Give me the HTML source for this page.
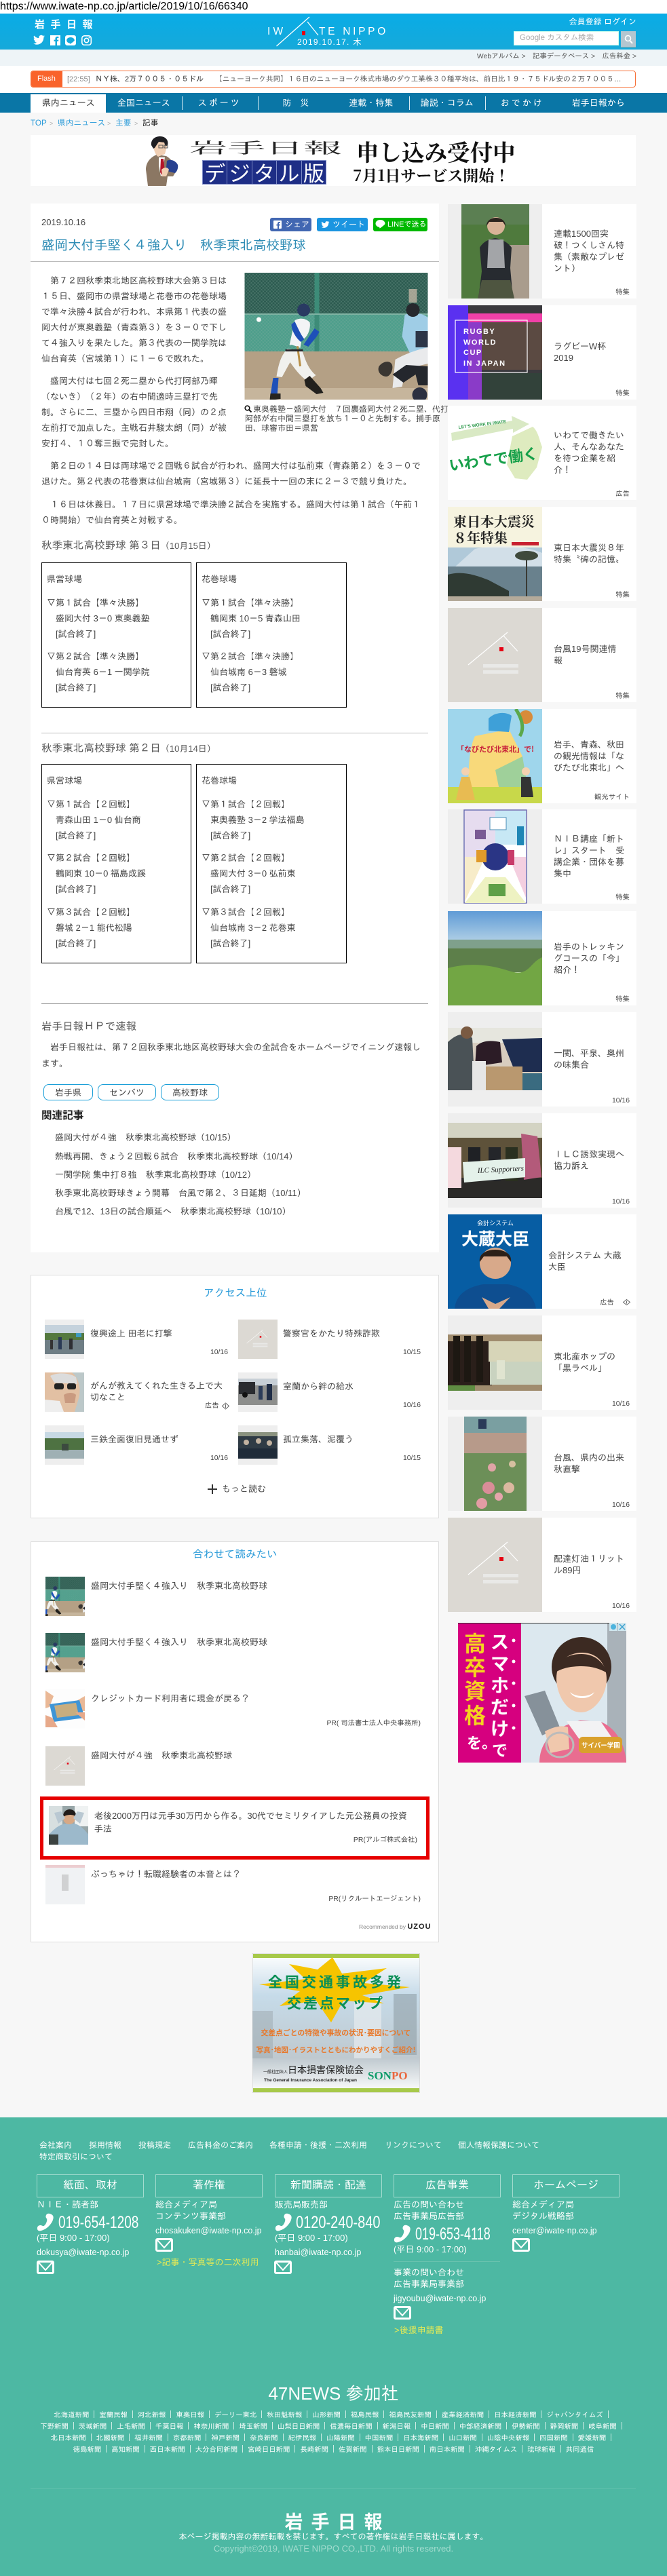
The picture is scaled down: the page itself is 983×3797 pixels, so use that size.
<!DOCTYPE html>
<html lang="ja"><head><meta charset="utf-8"><title>盛岡大付手堅く4強入り 秋季東北高校野球</title>
<style>
html,body{margin:0;padding:0}
body{width:983px;height:3797px;position:relative;overflow:hidden;background:#f7f7f7;font-family:"Liberation Sans","IPAGothic","Noto Sans CJK JP",sans-serif;font-size:13px;color:#444}
.t{position:absolute;white-space:nowrap;line-height:20px}
.b{position:absolute;white-space:nowrap}
.abs{position:absolute}
svg{display:block}
a{color:inherit;text-decoration:none}
.lk{color:#2a9bd9}
.card{position:absolute;left:660px;width:278px;height:139px;background:#fff}
.card svg{position:absolute;left:0;top:0}
.card .x{position:absolute;left:156px;top:0;height:138px;width:115px;display:flex;align-items:center;line-height:17px;white-space:nowrap}
.card .l{position:absolute;right:10px;top:124px;line-height:14px;font-size:10.4px;white-space:nowrap}
.box{position:absolute;border:1px solid #000;box-sizing:border-box;background:#fff}
.box div{position:absolute;left:7px;white-space:nowrap;line-height:23px}
.tag{position:absolute;top:1598px;height:24px;line-height:23px;box-sizing:border-box;border:1px solid #1a9fd8;border-radius:8px;text-align:center;background:#fff}
.nav{position:absolute;top:139px;height:27px;line-height:25px;width:111.5px;text-align:center;color:#fff;font-size:13px}
.sep{position:absolute;top:142px;height:20px;width:1px;background:#d7ecf4}
.fb{position:absolute;top:3205px;width:158px;height:34px;line-height:31px;box-sizing:border-box;border:1px solid #a4dccf;text-align:center;color:#fff;font-size:16px}
.f{position:absolute;color:#fff;white-space:nowrap;line-height:20px}
.nl{position:absolute;left:0;width:983px;text-align:center;color:#fff;font-size:10.4px;line-height:17px;white-space:nowrap}
.nl i{display:inline-block;width:1px;height:11px;background:#cfece4;margin:0 7px;vertical-align:-1px}
.d{position:absolute;font-size:10.4px;line-height:14px;white-space:nowrap}
</style></head><body>
<svg width="0" height="0" style="position:absolute">
<defs>
<pattern id="ch" width="5" height="5" patternUnits="userSpaceOnUse"><path d="M0 0L5 5M5 0L0 5" stroke="#8fb5a8" stroke-width=".5" opacity=".55"/></pattern>
<symbol id="bb" viewBox="0 0 270 187">
<rect width="270" height="62" fill="#2c5b50"/><rect y="62" width="270" height="54" fill="#4d9e8b"/><rect y="116" width="270" height="71" fill="#b4a085"/>
<rect width="270" height="116" fill="url(#ch)"/>
<rect x="103" y="0" width="7" height="116" fill="#3d8c78"/><rect x="0" y="60" width="270" height="2" fill="#7fb3a3"/>
<rect y="170" width="270" height="17" fill="#c6b59c"/>
<circle cx="21" cy="69" r="3.5" fill="#fff"/>
<path d="M236 62c10-4 26-3 34 4v50l-24 8-14-30z" fill="#9fcde6"/><circle cx="248" cy="55" r="10" fill="#26282d"/><rect x="242" y="24" width="12" height="20" fill="#c9b9a8" opacity=".75"/>
<path d="M252 86h18v24h-18z" fill="#2c3547"/><path d="M222 128c14-8 30-14 48-18v24l-32 8-6 26-14 2z" fill="#e9eaec"/><path d="M218 150l20-14 32 2v28h-14l-4-16-18 12z" fill="#24272d"/><path d="M198 138c6-8 16-9 19-3s-2 19-9 18c-8-1-13-8-10-15z" fill="#3a3632"/>
<circle cx="258" cy="180" r="11" fill="#2c3040"/>
<circle cx="87" cy="55" r="9.5" fill="#293a62"/>
<path d="M74 70c8-4 16-3 22 3 2 10-4 24-12 26l-2 12c-6-3-14-6-16-4z" fill="#f3f4f6"/>
<path d="M74 72c4 8 8 18 14 26l-5 4c-8-6-14-18-14-26z" fill="#1e50b8"/><path d="M103 82l-16 24 7 3c6-8 13-14 16-22z" fill="#1e50b8"/>
<path d="M63 112l22 3c4 12 8 26 20 36l-12 9c-12-8-20-20-26-28l-12 22-8-1c3-18 6-30 16-41z" fill="#f1f1ee"/>
<path d="M50 155l-8 0-4 26 10 2z" fill="#1e50b8"/><path d="M38 178h15v8l-16 2z" fill="#26241f"/>
<path d="M88 158l8-6 16 18 4 7-10 2-16-12z" fill="#22201d"/>
<rect x="78" y="108" width="3" height="30" fill="#b88f47" transform="rotate(-8 80 120)"/>
<rect x="60" y="113" width="26" height="3" fill="#27262a"/>
</symbol>
<symbol id="ph" viewBox="0 0 139 139">
<rect width="139" height="139" fill="#dcd9d3"/>
<path d="M30 84L88 36M82 41L103 64" stroke="#fff" stroke-width="1.2" fill="none"/><rect x="76" y="58" width="6" height="6" fill="#e60012"/>
<rect x="52" y="83" width="52" height="5" fill="#eee" opacity=".75"/><rect x="52" y="92" width="52" height="5" fill="#eee" opacity=".75"/>
</symbol>
</defs></svg>

<div class="t" style="left:0;top:0;font-size:16px;color:#000;font-family:'Liberation Sans',sans-serif;background:#fff;width:983px">https://www.iwate-np.co.jp/article/2019/10/16/66340</div>

<!-- header -->
<div class="abs" style="left:0;top:20px;width:983px;height:53px;background:linear-gradient(#09ace6,#16a9da)"></div>
<div class="t" style="left:51px;top:26px;font-size:15px;color:#fff;letter-spacing:8.5px;font-weight:bold;font-family:'Noto Sans CJK JP',sans-serif">岩手日報</div>
<svg class="abs" style="left:49px;top:51px" width="90" height="16" viewBox="0 0 90 16">
<path fill="#fff" transform="scale(.71) translate(0 -1)" d="M23.95 4.57a10 10 0 0 1-2.82.77 4.96 4.96 0 0 0 2.16-2.72 9.9 9.9 0 0 1-3.12 1.18 4.92 4.92 0 0 0-8.38 4.48A13.96 13.96 0 0 1 1.64 3.16a4.92 4.92 0 0 0 1.52 6.57 4.9 4.9 0 0 1-2.23-.61v.06a4.92 4.92 0 0 0 3.95 4.83 4.94 4.94 0 0 1-2.22.08 4.93 4.93 0 0 0 4.6 3.42A9.87 9.87 0 0 1 0 19.54a13.94 13.94 0 0 0 7.55 2.21c9.05 0 14-7.5 14-13.98 0-.21 0-.42-.02-.63A9.94 9.94 0 0 0 24 4.59z"/>
<path fill="#fff" fill-rule="evenodd" d="M25 1h15v15h-5v-6h2l.3-2.4H35V6.2c0-.7.2-1.1 1.1-1.1h1.3V3c-.6-.1-1.2-.1-1.9-.1-1.9 0-3 1.1-3 3.1v1.6h-2V10h2v6h-7.5z"/>
<path fill="#fff" fill-rule="evenodd" d="M50 1h10a3 3 0 0 1 3 3v9a3 3 0 0 1-3 3H50a3 3 0 0 1-3-3V4a3 3 0 0 1 3-3zm5 3c-3.3 0-5.8 2-5.8 4.4 0 2.2 1.9 3.9 4.6 4.3.2.4 0 1 .3 1.1.4.1 3.9-2.2 5.2-3.5.9-.9 1.5-1 1.5-1.9C60.800 6 58.300 4 55 4z"/>
<g fill="none" stroke="#fff" stroke-width="1.6"><rect x="71.800" y="1.800" width="13.500" height="13.500" rx="3.500"/><circle cx="78.500" cy="8.500" r="3.200"/></g><circle cx="82.500" cy="4.500" r="1" fill="#fff"/>
</svg>
<svg class="abs" style="left:400px;top:20px" width="80" height="54" viewBox="0 0 80 54"><path d="M7.500 48L56 5M53 12L69 32" stroke="#fff" stroke-width="1.300" fill="none"/><rect x="45" y="26" width="5" height="6" fill="#e60012"/></svg>
<div class="t" style="left:394px;top:37px;font-size:15.500px;color:#fff;letter-spacing:4.200px">IW</div>
<div class="t" style="left:470px;top:37px;font-size:15.500px;color:#fff;letter-spacing:3.700px">TE NIPPO</div>
<div class="t" style="left:438px;top:52px;font-size:12px;color:#fff;letter-spacing:1.300px;font-family:'Liberation Sans','Noto Sans CJK JP',sans-serif">2019.10.17. 木</div>
<div class="t" style="right:45px;top:22px;font-size:12px;color:#fff">会員登録 ログイン</div>
<div class="abs" style="left:757px;top:46px;width:155px;height:21px;background:#fff;border:1px solid #cfe;box-sizing:border-box"></div>
<div class="t" style="left:766px;top:46px;font-size:11.500px;color:#a9a9a9">Google カスタム検索</div>
<div class="abs" style="left:915px;top:46px;width:22px;height:23px;background:#b4c6d0;border-bottom:1px solid #8aa"></div>
<svg class="abs" style="left:920px;top:51px" width="13" height="14" viewBox="0 0 13 14"><circle cx="5.500" cy="5.500" r="4" fill="none" stroke="#fff" stroke-width="1.600"/><path d="M8.500 9L12 13" stroke="#fff" stroke-width="2"/></svg>
<div class="abs" style="left:0;top:73px;width:983px;height:24px;background:#eef4f7"></div>
<div class="t" style="right:45px;top:74px;font-size:10.400px;color:#555;letter-spacing:0">Webアルバム &gt;　記事データベース &gt;　広告料金 &gt;</div>
<div class="abs" style="left:0;top:97px;width:983px;height:40px;background:#fff"></div>

<!-- flash -->
<div class="abs" style="left:45px;top:104px;width:892px;height:25px;box-sizing:border-box;border:1px solid #f7723a;border-radius:4px;background:#fff;overflow:hidden"><div class="abs" style="left:0;top:0;width:46px;height:25px;background:#f9632b"></div></div>
<div class="t" style="left:55px;top:106px;font-size:11px;color:#fff">Flash</div>
<div class="t" style="left:99px;top:107px;font-size:11px;color:#888">[22:55]</div>
<div class="t" style="left:140px;top:107px;font-size:11px;color:#333">ＮＹ株、2万７００５・０５ドル</div>
<div class="t" style="left:317px;top:107px;font-size:10.700px;color:#555">【ニューヨーク共同】１６日のニューヨーク株式市場のダウ工業株３０種平均は、前日比１９・７５ドル安の２万７００５…</div>

<!-- nav -->
<div class="abs" style="left:0;top:137px;width:983px;height:29px;background:#0a76a6"></div>
<div class="abs" style="left:45px;top:139px;width:111px;height:27px;background:#fff"></div>
<div class="nav" style="left:45px;color:#333">県内ニュース</div>
<div class="nav" style="left:156px">全国ニュース</div>
<div class="nav" style="left:268px;letter-spacing:3px">スポーツ</div>
<div class="nav" style="left:380px">防　災</div>
<div class="nav" style="left:491px">連載・特集</div>
<div class="nav" style="left:603px">論説・コラム</div>
<div class="nav" style="left:714px;letter-spacing:3px">おでかけ</div>
<div class="nav" style="left:826px">岩手日報から</div>
<div class="sep" style="left:268px"></div><div class="sep" style="left:380px"></div><div class="sep" style="left:603px"></div><div class="sep" style="left:715px"></div>

<!-- breadcrumb -->
<div class="t" style="left:45px;top:172px;font-size:11.700px"><span class="lk" style="position:absolute;left:0">TOP</span><span class="lk" style="position:absolute;left:40px">県内ニュース</span><span class="lk" style="position:absolute;left:125px">主要</span><span style="position:absolute;left:165px;color:#222">記事</span><span style="position:absolute;left:28px;color:#aaa;font-size:9px">&gt;</span><span style="position:absolute;left:113px;color:#aaa;font-size:9px">&gt;</span><span style="position:absolute;left:153px;color:#aaa;font-size:9px">&gt;</span></div>

<!-- banner -->
<div class="abs" style="left:45px;top:199px;width:892px;height:75px;background:#fff"></div>
<svg class="abs" style="left:210px;top:200px" width="56" height="74" viewBox="0 0 56 74">
<path d="M8 74l-3-24c0-10 6-18 16-22l14 2c7 4 13 12 16 20l-6 10-8 0-2 14z" fill="#8b7763"/>
<path d="M24 32l9 0-2 10 1 14-5 4-3-16z" fill="#fff"/><path d="M27 34l4 0 2 20-3 6-4-6z" fill="#b3152a"/>
<path d="M16 12c0-6 5-10 11-9s11 7 9 13l-3 11-10 4c-4-3-7-10-7-19z" fill="#f1cfb3"/>
<path d="M13 14c-1-8 5-13 13-13s13 6 11 13l-3 2-2-6-8-1-6 9-2 1z" fill="#1e1e22"/>
<rect x="24" y="14" width="6" height="4" fill="none" stroke="#555"/><rect x="32" y="14" width="5" height="4" fill="none" stroke="#555"/>
<path d="M36 37c6-3 13 0 16 6 1 4-1 10-4 12l-9-2-4-6z" fill="#26408f"/>
<path d="M28 50c4-4 9-4 11 0l-4 10-6 0z" fill="#f1cfb3"/>
</svg>
<div class="t" style="left:279px;top:206px;line-height:24px;font-size:22px;transform:scaleX(2.55);transform-origin:0 0;color:#222;font-family:'Noto Serif CJK SC','Liberation Serif',serif">岩手日報</div>
<div class="abs" style="left:298px;top:236px;width:183px;height:36px;background:#1e2e86;border:1px solid #7a88c4;box-sizing:border-box;display:flex">
<span style="flex:1;color:#fff;font-size:31px;line-height:33px;text-align:center;border-right:1px solid #7a88c4;font-family:'Noto Sans CJK JP',sans-serif">デ</span><span style="flex:1;color:#fff;font-size:31px;line-height:33px;text-align:center;border-right:1px solid #7a88c4;font-family:'Noto Sans CJK JP',sans-serif">ジ</span><span style="flex:1;color:#fff;font-size:31px;line-height:33px;text-align:center;border-right:1px solid #7a88c4;font-family:'Noto Sans CJK JP',sans-serif">タ</span><span style="flex:1;color:#fff;font-size:31px;line-height:33px;text-align:center;border-right:1px solid #7a88c4;font-family:'Noto Sans CJK JP',sans-serif">ル</span><span style="flex:1;color:#fff;font-size:31px;line-height:33px;text-align:center;font-family:'Noto Sans CJK JP',sans-serif">版</span></div>
<div class="t" style="left:525px;top:204px;line-height:38px;font-size:33.500px;color:#111;font-weight:bold;font-family:'Noto Serif CJK SC','Noto Serif CJK JP',serif">申し込み受付中</div>
<div class="t" style="left:520px;top:244px;line-height:28px;font-size:23px;color:#111;font-weight:bold;font-family:'Noto Serif CJK SC','Noto Serif CJK JP',serif">7月1日サービス開始！</div>

<!-- article card -->
<div class="abs" style="left:45px;top:300px;width:602px;height:1546px;background:#fff"></div>
<div class="t" style="left:61px;top:318px;font-size:13px">2019.10.16</div>
<div class="abs" style="left:398px;top:321px;width:61px;height:20px;background:#4267b2;border-radius:3px"></div>
<svg class="abs" style="left:403px;top:325px" width="12" height="12" viewBox="0 0 12 12"><path fill="#fff" fill-rule="evenodd" d="M1 0h10a1 1 0 0 1 1 1v10a1 1 0 0 1-1 1H8V7.500h1.600L10 5.700H8V4.600c0-.6.200-.9.900-.9H10V2.100C9.500 2 9 2 8.500 2 7 2 6 3 6 4.500v1.200H4.400v1.800H6V12H1a1 1 0 0 1-1-1V1a1 1 0 0 1 1-1z"/></svg>
<div class="t" style="left:420px;top:321px;font-size:12px;color:#fff">シェア</div>
<div class="abs" style="left:467px;top:321px;width:75px;height:20px;background:#1b95e0;border-radius:3px"></div>
<svg class="abs" style="left:473px;top:325px" width="13" height="12" viewBox="0 0 24 24"><path fill="#fff" d="M23.950 4.570a10 10 0 0 1-2.820.770 4.960 4.960 0 0 0 2.160-2.720 9.900 9.900 0 0 1-3.120 1.180 4.920 4.920 0 0 0-8.380 4.480A13.960 13.960 0 0 1 1.640 3.160a4.920 4.920 0 0 0 1.520 6.570 4.900 4.900 0 0 1-2.230-.610v.060a4.920 4.920 0 0 0 3.950 4.830 4.940 4.940 0 0 1-2.220.080 4.930 4.930 0 0 0 4.600 3.420A9.870 9.870 0 0 1 0 19.540a13.940 13.940 0 0 0 7.550 2.210c9.050 0 14-7.500 14-13.980 0-.210 0-.420-.020-.630A9.940 9.940 0 0 0 24 4.590z"/></svg>
<div class="t" style="left:490px;top:321px;font-size:12px;color:#fff">ツイート</div>
<div class="abs" style="left:550px;top:321px;width:80px;height:20px;background:#00b900;border-radius:3px"></div>
<svg class="abs" style="left:553px;top:323px" width="15" height="15" viewBox="0 0 15 15"><path fill="#fff" d="M7.500 1C3.600 1 .5 3.400.5 6.500c0 2.700 2.300 4.900 5.500 5.400.4.100.3 1.500.5 1.600.3.100 3.500-2.200 5.500-3.900 1.200-1 2.500-1.900 2.500-3.100C14.500 3.400 11.400 1 7.500 1z"/></svg>
<div class="t" style="left:571px;top:321px;font-size:11px;color:#fff">LINEで送る</div>
<div class="t" style="left:61px;top:352px;font-size:19.500px;color:#2e8cb5">盛岡大付手堅く４強入り　秋季東北高校野球</div>
<div class="abs" style="left:45px;top:385px;width:602px;height:1px;background:#bbb"></div>

<svg class="abs" style="left:360px;top:402px" width="271" height="187" viewBox="0 0 270 187"><use href="#bb" width="270" height="187"/></svg>
<svg class="abs" style="left:360px;top:597px" width="11" height="11" viewBox="0 0 11 11"><circle cx="4.500" cy="4.500" r="3.300" fill="none" stroke="#111" stroke-width="1.600"/><path d="M7 7l3.500 3.500" stroke="#111" stroke-width="2"/></svg>
<div class="b" style="left:373px;top:596px;font-size:12px;line-height:14px">東奥義塾－盛岡大付　７回裏盛岡大付２死二塁、代打</div>
<div class="b" style="left:361px;top:610px;font-size:12px;line-height:14px">阿部が右中間三塁打を放ち１－０と先制する。捕手原<br>田、球審市田＝県営</div>

<div class="b" style="left:61px;top:402px;line-height:23px">　第７２回秋季東北地区高校野球大会第３日は<br>１５日、盛岡市の県営球場と花巻市の花巻球場<br>で準々決勝４試合が行われ、本県第１代表の盛<br>岡大付が東奥義塾（青森第３）を３－０で下し<br>て４強入りを果たした。第３代表の一関学院は<br>仙台育英（宮城第１）に１－６で敗れた。</div>
<div class="b" style="left:61px;top:550px;line-height:23px">　盛岡大付は七回２死二塁から代打阿部乃暉<br>（ないき）（２年）の右中間適時三塁打で先<br>制。さらに二、三塁から四日市翔（同）の２点<br>左前打で加点した。主戦石井駿太朗（同）が被<br>安打４、１０奪三振で完封した。</div>
<div class="b" style="left:61px;top:675px;line-height:23px">　第２日の１４日は両球場で２回戦６試合が行われ、盛岡大付は弘前東（青森第２）を３－０で<br>退けた。第２代表の花巻東は仙台城南（宮城第３）に延長十一回の末に２－３で競り負けた。</div>
<div class="b" style="left:61px;top:732px;line-height:23px">　１６日は休養日。１７日に県営球場で準決勝２試合を実施する。盛岡大付は第１試合（午前１<br>０時開始）で仙台育英と対戦する。</div>

<div class="t" style="left:61px;top:795px;font-size:15.600px;color:#555">秋季東北高校野球 第３日<span style="font-size:13px">（10月15日）</span></div>

<div class="box" style="left:61px;top:829px;width:221px;height:214px"><div style="top:12px">県営球場</div><div style="top:47px">▽第１試合【準々決勝】<br>　盛岡大付 3－0 東奥義塾<br>　[試合終了]</div><div style="top:126px">▽第２試合【準々決勝】<br>　仙台育英 6－1 一関学院<br>　[試合終了]</div></div>
<div class="box" style="left:289px;top:829px;width:222px;height:214px"><div style="top:12px">花巻球場</div><div style="top:47px">▽第１試合【準々決勝】<br>　鶴岡東 10－5 青森山田<br>　[試合終了]</div><div style="top:126px">▽第２試合【準々決勝】<br>　仙台城南 6－3 磐城<br>　[試合終了]</div></div>

<div class="abs" style="left:61px;top:1080px;width:570px;height:1px;background:#bbb"></div>
<div class="t" style="left:61px;top:1094px;font-size:15.600px;color:#555">秋季東北高校野球 第２日<span style="font-size:13px">（10月14日）</span></div>

<div class="box" style="left:61px;top:1126px;width:221px;height:294px"><div style="top:12px">県営球場</div><div style="top:47px">▽第１試合【２回戦】<br>　青森山田 1－0 仙台商<br>　[試合終了]</div><div style="top:126px">▽第２試合【２回戦】<br>　鶴岡東 10－0 福島成蹊<br>　[試合終了]</div><div style="top:206px">▽第３試合【２回戦】<br>　磐城 2－1 能代松陽<br>　[試合終了]</div></div>
<div class="box" style="left:289px;top:1126px;width:222px;height:294px"><div style="top:12px">花巻球場</div><div style="top:47px">▽第１試合【２回戦】<br>　東奥義塾 3－2 学法福島<br>　[試合終了]</div><div style="top:126px">▽第２試合【２回戦】<br>　盛岡大付 3－0 弘前東<br>　[試合終了]</div><div style="top:206px">▽第３試合【２回戦】<br>　仙台城南 3－2 花巻東<br>　[試合終了]</div></div>

<div class="abs" style="left:61px;top:1479px;width:570px;height:1px;background:#999"></div>
<div class="t" style="left:61px;top:1504px;font-size:15.600px;color:#555">岩手日報ＨＰで速報</div>
<div class="b" style="left:61px;top:1532px;line-height:24px">　岩手日報社は、第７２回秋季東北地区高校野球大会の全試合をホームページでイニング速報し<br>ます。</div>
<div class="tag" style="left:64px;width:73px">岩手県</div><div class="tag" style="left:144px;width:86px">センバツ</div><div class="tag" style="left:237px;width:86px">高校野球</div>
<div class="t" style="left:61px;top:1635px;font-size:15.600px;font-weight:bold;color:#222;font-family:'Liberation Sans','Noto Sans CJK JP',sans-serif">関連記事</div>
<div class="t" style="left:81px;top:1667px">盛岡大付が４強　秋季東北高校野球（10/15）</div>
<div class="t" style="left:81px;top:1695px">熱戦再開、きょう２回戦６試合　秋季東北高校野球（10/14）</div>
<div class="t" style="left:81px;top:1722px">一関学院 集中打８強　秋季東北高校野球（10/12）</div>
<div class="t" style="left:81px;top:1749px">秋季東北高校野球きょう開幕　台風で第２、３日延期（10/11）</div>
<div class="t" style="left:81px;top:1776px">台風で12、13日の試合順延へ　秋季東北高校野球（10/10）</div>

<!-- access -->
<div class="abs" style="left:45px;top:1879px;width:602px;height:359px;background:#fff;border:1px solid #ddd;box-sizing:border-box"></div>
<div class="t" style="left:300px;top:1897px;font-size:15.600px;color:#2a9bd9">アクセス上位</div>
<svg class="abs" style="left:66px;top:1945px" width="58" height="58" viewBox="0 0 58 58"><rect width="58" height="58" fill="#eee"/><rect y="8" width="58" height="43" fill="#8ea9a0"/><rect y="8" width="58" height="12" fill="#c5d2dc"/><rect y="20" width="58" height="10" fill="#54793f"/><path d="M0 30h58v21H0z" fill="#6f7e85"/><rect x="8" y="30" width="4" height="14" fill="#333"/><rect x="20" y="26" width="5" height="18" fill="#2a3a55"/><rect x="36" y="28" width="5" height="16" fill="#2e2e33"/><rect x="46" y="20" width="8" height="6" fill="#3e9bbf"/></svg>
<svg class="abs" style="left:351px;top:1945px" width="58" height="58" viewBox="0 0 139 139"><use href="#ph" width="139" height="139"/></svg>
<svg class="abs" style="left:66px;top:2023px" width="58" height="58" viewBox="0 0 58 58"><rect width="58" height="58" fill="#bcc8c9"/><path d="M0 0h40c10 8 14 24 10 38l-6 20H0z" fill="#e2c0a3"/><path d="M0 40l22 2 6 16H0z" fill="#eee"/><path d="M8 5c12-6 30-4 38 2l2 10-34-2z" fill="#dcdcdc"/><rect x="14" y="16" width="14" height="9" rx="3" fill="#222"/><rect x="33" y="16" width="13" height="9" rx="3" fill="#222"/><path d="M28 33c6-4 14-4 18 0l-2 12H30z" fill="#c99a80"/></svg>
<svg class="abs" style="left:351px;top:2023px" width="58" height="58" viewBox="0 0 58 58"><rect width="58" height="58" fill="#eee"/><rect y="9" width="58" height="39" fill="#8d8e8c"/><rect y="9" width="58" height="10" fill="#c7cfd6"/><rect x="1" y="14" width="24" height="18" fill="#2a2c30"/><circle cx="10" cy="33" r="4" fill="#111"/><rect x="30" y="20" width="6" height="20" fill="#2b3c59"/><rect x="42" y="17" width="8" height="24" fill="#1f2d46"/></svg>
<svg class="abs" style="left:66px;top:2101px" width="58" height="58" viewBox="0 0 58 58"><rect width="58" height="58" fill="#eee"/><rect y="10" width="58" height="39" fill="#4e7242"/><rect y="10" width="58" height="9" fill="#c7d9e4"/><rect y="36" width="58" height="13" fill="#9fb0b4"/><rect x="25" y="27" width="10" height="10" fill="#3c4a3f"/></svg>
<svg class="abs" style="left:351px;top:2101px" width="58" height="58" viewBox="0 0 58 58"><rect width="58" height="58" fill="#eee"/><rect y="10" width="58" height="39" fill="#2f3b45"/><rect y="10" width="58" height="6" fill="#8a927f"/><circle cx="12" cy="25" r="4" fill="#c2b2a0"/><circle cx="30" cy="23" r="4" fill="#c2b2a0"/><circle cx="46" cy="26" r="4" fill="#c2b2a0"/><rect y="34" width="58" height="15" fill="#1f2b39"/></svg>

<div class="t" style="left:133px;top:1956px">復興途上 田老に打撃</div>
<div class="t" style="left:417px;top:1956px">警察官をかたり特殊詐欺</div>
<div class="b" style="left:133px;top:2034px;line-height:17px">がんが教えてくれた生きる上で大<br>切なこと</div>
<div class="t" style="left:417px;top:2034px">室蘭から絆の給水</div>
<div class="t" style="left:133px;top:2112px">三鉄全面復旧見通せず</div>
<div class="t" style="left:417px;top:2112px">孤立集落、泥覆う</div>
<div class="d" style="right:647px;top:1987px">10/16</div><div class="d" style="right:363px;top:1987px">10/15</div>
<div class="t" style="left:302px;top:2063px;font-size:10.400px">広告</div>
<svg class="abs" style="left:327px;top:2067px" width="11" height="11" viewBox="0 0 11 11"><path d="M.5 5.500L5.500 1l5 4.500-5 4.500z" fill="none" stroke="#666"/><path d="M5.500 3v5" stroke="#666"/></svg>
<div class="d" style="right:363px;top:2065px">10/16</div><div class="d" style="right:647px;top:2143px">10/16</div><div class="d" style="right:363px;top:2143px">10/15</div>
<div class="abs" style="left:306px;top:2194px;width:14px;height:2px;background:#333"></div><div class="abs" style="left:312px;top:2188px;width:2px;height:14px;background:#333"></div>
<div class="t" style="left:327px;top:2185px">もっと読む</div>

<!-- recommended -->
<div class="abs" style="left:45px;top:2272px;width:602px;height:591px;background:#fff;border:1px solid #ddd;box-sizing:border-box"></div>
<div class="t" style="left:284px;top:2282px;font-size:15.600px;color:#2a9bd9">合わせて読みたい</div>
<svg class="abs" style="left:67px;top:2324px" width="58" height="58" viewBox="41 0 187 187"><use href="#bb" width="270" height="187"/></svg>
<svg class="abs" style="left:67px;top:2407px" width="58" height="58" viewBox="41 0 187 187"><use href="#bb" width="270" height="187"/></svg>
<svg class="abs" style="left:67px;top:2490px" width="58" height="58" viewBox="0 0 58 58"><rect width="58" height="58" fill="#fdfdfd"/><path d="M0 2l12 8-6 16-6 2zM58 10l-14 8 2 14 12 0z" fill="#eab896"/><path d="M6 22l44-6 8 26-46 6z" fill="#3f95d6"/><path d="M13 24l32-4 4 18-32 4z" fill="#c8ad7f"/><path d="M0 38l10 4 8 14H0zM44 34l14 0v12z" fill="#e7a98a"/></svg>
<svg class="abs" style="left:67px;top:2574px" width="58" height="58" viewBox="0 0 139 139"><use href="#ph" width="139" height="139"/></svg>
<div class="abs" style="left:59px;top:2648px;width:574px;height:93px;box-sizing:border-box;border:5px solid #e60000"></div>
<svg class="abs" style="left:72px;top:2662px" width="58" height="57" viewBox="0 0 58 57"><rect width="58" height="57" fill="#98a6a8"/><rect x="0" y="0" width="20" height="57" fill="#d7dfe0"/><rect x="38" y="0" width="20" height="30" fill="#eff2f2"/><path d="M0 57V42c8-8 14-14 24-16l14 0c8 2 16 10 20 16v15z" fill="#9cb9cb"/><circle cx="30" cy="18" r="9" fill="#d7a885"/><path d="M21 16c0-8 5-11 10-11s10 4 9 11c-4-4-13-4-19 0z" fill="#201b19"/><path d="M14 26L8 10l10-2 6 10zM46 26l6-16-10-2-6 10z" fill="#b9c8d2"/><rect y="42" width="14" height="15" fill="#3b4240"/></svg>
<svg class="abs" style="left:67px;top:2749px" width="58" height="58" viewBox="0 0 58 58"><rect width="58" height="58" fill="#f0f2f4"/><rect y="0" width="58" height="4" fill="#eccdd0"/><rect x="24" y="14" width="10" height="24" fill="#bbb" opacity=".6"/></svg>

<div class="t" style="left:134px;top:2328px">盛岡大付手堅く４強入り　秋季東北高校野球</div>
<div class="t" style="left:134px;top:2411px">盛岡大付手堅く４強入り　秋季東北高校野球</div>
<div class="t" style="left:134px;top:2494px">クレジットカード利用者に現金が戻る？</div>
<div class="d" style="right:363px;top:2534px">PR( 司法書士法人中央事務所)</div>
<div class="t" style="left:134px;top:2578px">盛岡大付が４強　秋季東北高校野球</div>
<div class="b" style="left:139px;top:2667px;line-height:19px">老後2000万円は元手30万円から作る。30代でセミリタイアした元公務員の投資<br>手法</div>
<div class="d" style="right:368px;top:2706px">PR(アルゴ株式会社)</div>
<div class="t" style="left:134px;top:2753px">ぶっちゃけ！転職経験者の本音とは？</div>
<div class="d" style="right:363px;top:2793px">PR(リクルートエージェント)</div>
<div class="b" style="left:529px;top:2833px;font-size:8.500px;line-height:14px;color:#888">Recommended by <b style="font-size:11px;color:#222;letter-spacing:1px">UZOU</b></div>

<!-- sonpo ad -->
<svg class="abs" style="left:372px;top:2879px" width="247" height="206" viewBox="0 0 247 206">
<defs><linearGradient id="sb" x1="0" y1="0" x2="0" y2="1"><stop offset="0" stop-color="#fff"/><stop offset=".3" stop-color="#c6dbe9"/><stop offset=".75" stop-color="#bfc9cf"/><stop offset="1" stop-color="#fff"/></linearGradient></defs>
<rect width="247" height="206" fill="url(#sb)" stroke="#ccc"/><rect x="1" y="1" width="245" height="6" fill="#a7c94a"/><rect x="1" y="199" width="245" height="6" fill="#a7c94a"/>
<rect x="0" y="85" width="30" height="70" fill="#9ca7ad" opacity=".5"/><rect x="150" y="65" width="40" height="90" fill="#e7ebee" opacity=".7"/><rect x="208" y="60" width="34" height="90" fill="#8c9aa3" opacity=".55"/>
<path d="M118 6l14 24 66-8-34 22 68 6-70 12 32 12-60-4-18 32-22-32-54 8 30-22-60-10 68-8-24-22 42 8z" fill="#f6c400"/>
<text x="123" y="50" text-anchor="middle" font-size="21" font-weight="bold" fill="#0a8f56" font-family="'Noto Sans CJK JP',sans-serif" letter-spacing="4">全国交通事故多発</text>
<text x="123" y="81" text-anchor="middle" font-size="21" font-weight="bold" fill="#0a8f56" font-family="'Noto Sans CJK JP',sans-serif" letter-spacing="3">交差点マップ</text>
<text x="123" y="121" text-anchor="middle" font-size="10.800" font-weight="bold" fill="#e8782a" font-family="'Noto Sans CJK JP',sans-serif">交差点ごとの特徴や事故の状況･要因について</text>
<text x="123" y="146" text-anchor="middle" font-size="10.500" font-weight="bold" fill="#e8782a" font-family="'Noto Sans CJK JP',sans-serif">写真･地図･イラストとともにわかりやすくご紹介!</text>
<text x="16" y="177" font-size="14" fill="#222" font-family="'Noto Sans CJK JP',sans-serif"><tspan font-size="6">一般社団法人</tspan>日本損害保険協会</text>
<text x="17" y="189" font-size="6.500" font-weight="bold" fill="#222" font-family="'Liberation Sans',sans-serif">The General Insurance Association of Japan</text>
<text x="170" y="186" font-size="17" font-weight="bold" fill="#0e9c6a" font-family="'Liberation Serif',serif">SON<tspan fill="#e9683f">PO</tspan></text>
</svg>

<!-- sidebar -->
<div class="card" style="top:301px"><svg width="139" height="139" viewBox="0 0 139 139"><rect width="139" height="139" fill="#eee"/><rect x="20" width="100" height="139" fill="#4f7a3d"/><rect x="90" y="60" width="30" height="79" fill="#a99c8d"/><rect x="20" y="0" width="100" height="30" fill="#5b7f52"/><path d="M45 139l5-40-3-35c5-8 11-12 23-14 12 2 20 8 24 14l-2 30 4 45z" fill="#272b30"/><path d="M60 52h22l2 42H58z" fill="#a3a5a8"/><path d="M50 112h42l6 27H44z" fill="#4e5540"/><circle cx="71" cy="32" r="13" fill="#d8b397"/><path d="M57 32c0-16 28-16 28 0l-4-6-20 0z" fill="#2c241e"/></svg><div class="x">連載1500回突<br>破！つくしさん特<br>集（素敵なプレゼ<br>ント）</div><div class="l">特集</div></div>
<div class="card" style="top:450px"><svg width="139" height="139" viewBox="0 0 139 139"><rect width="139" height="139" fill="#5a31f0"/><rect x="30" width="109" height="139" fill="#3b3a3e"/><rect x="30" y="12" width="109" height="13" fill="#f040a8"/><rect x="30" y="25" width="20" height="114" fill="#8a3bc8"/><rect x="50" y="25" width="89" height="70" fill="#5b4a42"/><rect x="50" y="100" width="89" height="39" fill="#32423a"/><rect x="11" y="22" width="106" height="77" fill="none" stroke="#fff" stroke-width="1.200"/><text x="23" y="42" font-size="11" fill="#fff" font-weight="bold" letter-spacing="1.500" font-family="'Liberation Sans',sans-serif">RUGBY</text><text x="23" y="58" font-size="11" fill="#fff" font-weight="bold" letter-spacing="1.500" font-family="'Liberation Sans',sans-serif">WORLD</text><text x="23" y="73" font-size="11" fill="#fff" font-weight="bold" letter-spacing="1.500" font-family="'Liberation Sans',sans-serif">CUP</text><text x="23" y="89" font-size="11" fill="#fff" font-weight="bold" letter-spacing="1.500" font-family="'Liberation Sans',sans-serif">IN JAPAN</text></svg><div class="x">ラグビーW杯<br>2019</div><div class="l">特集</div></div>
<div class="card" style="top:598px"><svg width="139" height="139" viewBox="0 0 139 139"><rect width="139" height="139" fill="#fff"/><path d="M5 40l90-18-1-7 26 12-24 13 0-6-90 18z" fill="#d9e9c4"/><text x="16" y="34" font-size="6.500" font-weight="bold" fill="#2e9a4c" font-family="'Liberation Sans',sans-serif" transform="rotate(-7 16 34)">LET'S WORK IN IWATE</text><path d="M95 45l30-14c8 6 10 20 14 30l-8 30-14 18-18-2-12-20z" fill="#deebbf"/><text x="3" y="96" font-size="22" font-weight="bold" fill="#17a04a" font-family="'Noto Sans CJK JP',sans-serif" transform="rotate(-8 3 96)">いわてで働く</text></svg><div class="x">いわてで働きたい<br>人、そんなあなた<br>を待つ企業を紹<br>介！</div><div class="l">広告</div></div>
<div class="card" style="top:747px"><svg width="139" height="139" viewBox="0 0 139 139"><rect width="139" height="62" fill="#f6f3df"/><rect y="60" width="139" height="38" fill="#b0c9d9"/><path d="M40 62c30-6 70-6 99 6v30H0z" fill="#e9eef1" opacity=".6"/><rect y="88" width="139" height="51" fill="#69818d"/><path d="M0 100c20-6 40 0 60 8l30 16v15H0z" fill="#2f3a33"/><rect y="132" width="139" height="7" fill="#b4aa9a"/><rect x="115" y="74" width="2" height="58" fill="#3a3a33"/><ellipse cx="116" cy="72" rx="17" ry="7" fill="#3f4a3c"/><text x="8" y="29" font-size="20" font-weight="bold" fill="#222" font-family="'Noto Serif CJK SC',serif">東日本大震災</text><text x="8" y="53" font-size="20" font-weight="bold" fill="#222" font-family="'Noto Serif CJK SC',serif">８年特集</text><rect x="94" y="52" width="40" height="5" fill="#c82030"/></svg><div class="x">東日本大震災８年<br>特集〝碑の記憶〟</div><div class="l">特集</div></div>
<div class="card" style="top:896px"><svg width="139" height="139" viewBox="0 0 139 139"><use href="#ph" width="139" height="139"/></svg><div class="x">台風19号関連情<br>報</div><div class="l">特集</div></div>
<div class="card" style="top:1045px"><svg width="139" height="139" viewBox="0 0 139 139"><rect width="139" height="139" fill="#9fd6ec"/><path d="M30 130c0-30 0-70 10-90l50-10 20 40-10 69z" fill="#f8d97a"/><path d="M70 90l40-20 10 60-40 9z" fill="#9fd09a"/><rect y="115" width="139" height="24" fill="#c8d84a"/><path d="M60 14c10-10 26-10 34-4l-4 24-30-2z" fill="#3ea0d8"/><circle cx="115" cy="12" r="10" fill="#d88b3a"/><path d="M100 0c8 12 14 28 6 40" fill="none" stroke="#5ca84a" stroke-width="5"/><text x="70" y="63" text-anchor="middle" font-size="11" font-weight="bold" fill="#c8203a" font-family="'Noto Sans CJK JP',sans-serif">「なびたび北東北」で!</text><path d="M20 100l12 0 8 34-28 0z" fill="#e8bb52"/><circle cx="26" cy="92" r="6" fill="#f4d1b0"/><path d="M108 100l14 0 4 30-18 0z" fill="#333"/><circle cx="115" cy="92" r="6" fill="#f4d1b0"/></svg><div class="x">岩手、青森、秋田<br>の観光情報は「な<br>びたび北東北」へ</div><div class="l">観光サイト</div></div>
<div class="card" style="top:1193px"><svg width="139" height="139" viewBox="0 0 139 139"><rect width="139" height="139" fill="#eee"/><rect x="24" y="1" width="92" height="137" fill="#fff" stroke="#6a6bb0" stroke-width="1.500"/><path d="M25 2h45v68H25z" fill="#e6dcef"/><path d="M70 2h45v50H70z" fill="#c7e8f5"/><path d="M25 70h30l-30 66z" fill="#f7ecc9"/><path d="M55 100l30 0 30 38H25z" fill="#eef2c2"/><path d="M90 70h25v60z" fill="#f4cfe0"/><circle cx="70" cy="70" r="20" fill="#2a3585"/><path d="M40 30h16v14H40z" fill="#7a5a94"/><path d="M62 12l24 0 0 18-24 0z" fill="#fff" stroke="#4a8cb5"/><rect x="102" y="25" width="10" height="28" fill="#1f86b5"/><rect x="42" y="60" width="15" height="18" fill="#e09a2a"/><rect x="88" y="60" width="10" height="22" fill="#c83a6a"/><rect x="60" y="110" width="25" height="18" fill="#5fa048"/></svg><div class="x">ＮＩＢ講座「新ト<br>レ」スタート　受<br>講企業・団体を募<br>集中</div><div class="l">特集</div></div>
<div class="card" style="top:1343px"><svg width="139" height="139" viewBox="0 0 139 139"><defs><linearGradient id="sk" x1="0" y1="0" x2="0" y2="1"><stop offset="0" stop-color="#5f9bd6"/><stop offset="1" stop-color="#c2dbe9"/></linearGradient></defs><rect width="139" height="55" fill="url(#sk)"/><rect y="42" width="139" height="18" fill="#7fa08c"/><rect y="55" width="139" height="35" fill="#5d7f4a"/><path d="M0 84c30-8 60-6 90 4s30-12 49-20v71H0z" fill="#72a644"/></svg><div class="x">岩手のトレッキン<br>グコースの「今」<br>紹介！</div><div class="l">特集</div></div>
<div class="card" style="top:1492px"><svg width="139" height="139" viewBox="0 0 139 139"><rect width="139" height="139" fill="#eee"/><rect y="23" width="139" height="92" fill="#d8cdbf"/><rect x="0" y="23" width="139" height="22" fill="#e6e6de"/><path d="M0 44c15-14 26-14 36-6l4 77H0z" fill="#4a5256"/><circle cx="28" cy="30" r="9" fill="#7a5a42"/><path d="M42 50c10-10 25-8 35-6l3 30-40 6z" fill="#2c1c26"/><path d="M80 40l59-2v50h-40z" fill="#1e2d50"/><rect x="50" y="80" width="60" height="35" fill="#b9986f"/><rect x="110" y="90" width="29" height="25" fill="#3a6b80"/><rect x="36" y="72" width="20" height="43" fill="#e6e6e6"/></svg><div class="x">一関、平泉、奥州<br>の味集合</div><div class="l">10/16</div></div>
<div class="card" style="top:1641px"><svg width="139" height="139" viewBox="0 0 139 139"><rect width="139" height="139" fill="#eee"/><rect y="14" width="139" height="111" fill="#5e523a"/><rect y="14" width="139" height="22" fill="#d3d3c3"/><rect y="95" width="139" height="30" fill="#2b2a28"/><rect x="0" y="50" width="20" height="60" fill="#f4d9de"/><rect x="30" y="50" width="18" height="50" fill="#1f2125"/><rect x="60" y="50" width="18" height="50" fill="#24262a"/><rect x="85" y="50" width="18" height="50" fill="#2a3020"/><path d="M108 30l24 4 6 60-26 4z" fill="#b35a7a"/><path d="M22 72l92-6 0 28-90 8z" fill="#e4f1ea"/><text x="44" y="88" font-size="11" font-style="italic" fill="#222" font-family="'Liberation Serif',serif" transform="rotate(-3 44 88)">ILC Supporters</text></svg><div class="x">ＩＬＣ誘致実現へ<br>協力訴え</div><div class="l">10/16</div></div>
<div class="card" style="top:1790px"><svg width="139" height="139" viewBox="0 0 139 139"><rect width="139" height="139" fill="#075da3"/><text x="70" y="16" text-anchor="middle" font-size="9" fill="#fff" font-family="'Noto Sans CJK JP',sans-serif">会計システム</text><text x="70" y="45" text-anchor="middle" font-size="25" font-weight="bold" fill="#fff" font-family="'Noto Sans CJK JP',sans-serif">大蔵大臣</text><circle cx="70" cy="72" r="23" fill="#d8a98a"/><path d="M47 70c-4-24 50-24 46 0l-6-8-34 0z" fill="#2c2018"/><path d="M10 139c2-22 20-32 42-36h36c22 4 38 14 42 36z" fill="#0e4e90"/><path d="M50 122l20 10 22-10-16 17H60z" fill="#d8a98a"/></svg><div class="x" style="left:148px">会計システム 大蔵<br>大臣</div><div class="l" style="right:33px;font-size:10.400px;top:124px">広告</div><svg style="left:258px;top:124px" width="11" height="11" viewBox="0 0 11 11"><path d="M.5 5.500L5.500 1.500l5 4-5 4z" fill="none" stroke="#666"/><path d="M5.500 3.500v4" stroke="#666"/></svg></div>
<div class="card" style="top:1939px"><svg width="139" height="139" viewBox="0 0 139 139"><rect width="139" height="139" fill="#eee"/><rect y="28" width="139" height="83" fill="#a08c6e"/><rect x="0" y="38" width="65" height="65" fill="#2a1f1a"/><rect x="8" y="30" width="10" height="68" fill="#1d1812"/><rect x="24" y="30" width="10" height="68" fill="#1d1812"/><rect x="42" y="30" width="10" height="68" fill="#1d1812"/><rect x="60" y="38" width="79" height="30" fill="#d7d5b8"/><rect x="62" y="68" width="77" height="34" fill="#c9d3c0"/><rect x="72" y="66" width="12" height="28" fill="#e0e4d0"/><rect y="103" width="40" height="8" fill="#5f8c42"/></svg><div class="x">東北産ホップの<br>「黒ラベル」</div><div class="l">10/16</div></div>
<div class="card" style="top:2088px"><svg width="139" height="139" viewBox="0 0 139 139"><rect width="139" height="139" fill="#eee"/><rect x="24" width="92" height="139" fill="#6c8f58"/><rect x="24" width="92" height="24" fill="#7a9fa1"/><rect x="24" y="24" width="92" height="30" fill="#b79a8a"/><circle cx="60" cy="105" r="9" fill="#d98d98"/><circle cx="50" cy="128" r="8" fill="#e39ca4"/><circle cx="90" cy="105" r="8" fill="#dcb8a0"/><circle cx="75" cy="118" r="6" fill="#e5a5ab"/><circle cx="65" cy="75" r="6" fill="#e0a4a6"/><circle cx="95" cy="70" r="5" fill="#d6c0a0"/><rect x="45" y="4" width="12" height="14" fill="#2a3a58"/></svg><div class="x">台風、県内の出来<br>秋直撃</div><div class="l">10/16</div></div>
<div class="card" style="top:2237px"><svg width="139" height="139" viewBox="0 0 139 139"><use href="#ph" width="139" height="139"/></svg><div class="x">配達灯油１リット<br>ル89円</div><div class="l">10/16</div></div>

<!-- sidebar ad -->
<svg class="abs" style="left:675px;top:2392px" width="248" height="206" viewBox="0 0 248 206">
<rect width="248" height="206" fill="#c8d8e4"/><rect x="93" y="0" width="155" height="206" fill="#dce8ef"/><rect x="220" y="0" width="28" height="206" fill="#a9b2b9"/>
<path d="M120 206c0-30 20-52 60-62l30 2c18 6 36 28 38 60z" fill="#e96d90"/><path d="M160 145l50 0 18 26-44 8z" fill="#f2f2f4"/>
<circle cx="182" cy="65" r="44" fill="#3c2a22"/><path d="M145 82c0-24 16-38 38-38s36 16 36 40c0 20-16 48-38 48s-36-28-36-50z" fill="#f0c8ad"/><path d="M142 74c6-20 20-28 40-28 20 0 32 12 38 28-14-8-26-10-38-10-14 0-28 2-40 10z" fill="#3c2a22"/><path d="M165 102c8 8 28 8 36 0-6 12-30 12-36 0z" fill="#fff"/>
<path d="M98 108l30-8 22 54-26 12z" fill="#86919a"/><path d="M128 160c12-6 24-10 34-6l2 32-28 6z" fill="#f0c8ad"/>
<rect x="0" y="0" width="93" height="206" fill="#d6007f"/><rect x="0" y="0" width="248" height="1" fill="#333"/>
<g font-family="'Noto Sans CJK JP',sans-serif" font-weight="bold"><text x="9" y="42" font-size="32" fill="#f5d220">高</text><text x="9" y="77" font-size="32" fill="#f5d220">卒</text><text x="9" y="112" font-size="32" fill="#f5d220">資</text><text x="9" y="148" font-size="32" fill="#f5d220">格</text><text x="13" y="185" font-size="22" fill="#fff">を。</text>
<text x="48" y="38" font-size="27" fill="#fff">ス</text><text x="48" y="70" font-size="27" fill="#fff">マ</text><text x="48" y="102" font-size="27" fill="#fff">ホ</text><text x="48" y="134" font-size="27" fill="#fff">だ</text><text x="48" y="166" font-size="27" fill="#fff">け</text><text x="50" y="196" font-size="23" fill="#fff">で</text></g>
<g fill="#fff"><circle cx="82" cy="26" r="2.500"/><circle cx="82" cy="57" r="2.500"/><circle cx="82" cy="89" r="2.500"/><circle cx="82" cy="122" r="2.500"/><circle cx="82" cy="155" r="2.500"/></g>
<ellipse cx="150" cy="180" rx="20" ry="18" fill="none" stroke="#bbb" stroke-width="3"/><rect x="178" y="168" width="64" height="24" rx="6" fill="#d9a02c"/><text x="182" y="184" font-size="9.500" font-weight="bold" fill="#fff" font-family="'Noto Sans CJK JP',sans-serif">サイバー学園</text>
<rect x="223" y="0" width="12" height="12" fill="#d0e6ee"/><circle cx="229" cy="6" r="4" fill="#4db3dd"/><rect x="236" y="0" width="12" height="12" fill="#d0e6ee"/><path d="M238 2l8 8M246 2l-8 8" stroke="#3aa0cf" stroke-width="1.500"/>
</svg>

<!-- footer -->
<div class="abs" style="left:0;top:3121px;width:983px;height:676px;background:#4db8a3"></div>
<div class="f" style="left:58px;top:3152px;font-size:12px">会社案内</div><div class="f" style="left:131px;top:3152px;font-size:12px">採用情報</div><div class="f" style="left:204px;top:3152px;font-size:12px">投稿規定</div><div class="f" style="left:277px;top:3152px;font-size:12px">広告料金のご案内</div><div class="f" style="left:397px;top:3152px;font-size:12px">各種申請・後援・二次利用</div><div class="f" style="left:567px;top:3152px;font-size:12px">リンクについて</div><div class="f" style="left:675px;top:3152px;font-size:12px">個人情報保護について</div><div class="f" style="left:58px;top:3169px;font-size:12px">特定商取引について</div>

<div class="fb" style="left:54px">紙面、取材</div><div class="fb" style="left:229px">著作権</div><div class="fb" style="left:405px">新聞購読・配達</div><div class="fb" style="left:580px">広告事業</div><div class="fb" style="left:755px">ホームページ</div>

<!-- col 1 -->
<div class="f" style="left:54px;top:3240px">ＮＩＥ・読者部</div>
<svg class="abs" style="left:54px;top:3262px" width="27" height="27" viewBox="0 0 30 30"><path fill="#fff" d="M21 1C29 3 28 8 26 13 22 21 15 27 7 29 3 30 1 28 1 25 1 22 3 20 6 20 9 20 10 22 12 21 15 19 17 14 17 11 17 9 15 8 15 6 15 3 17 0 21 1Z"/></svg>
<div class="f" style="left:86px;top:3261px;font-size:25px;line-height:30px;transform:scaleX(.76);transform-origin:0 0">019-654-1208</div>
<div class="f" style="left:54px;top:3289px">(平日 9:00 - 17:00)</div>
<div class="f" style="left:54px;top:3310px;font-size:12.500px">dokusya@iwate-np.co.jp</div>
<svg class="abs" style="left:54px;top:3332px" width="26" height="20" viewBox="0 0 26 20"><rect x="1.500" y="1.500" width="23" height="17" rx="1.500" fill="none" stroke="#fff" stroke-width="3"/><path d="M3 3l10 11L23 3" fill="none" stroke="#fff" stroke-width="2"/></svg>
<!-- col 2 -->
<div class="f" style="left:229px;top:3240px">総合メディア局</div><div class="f" style="left:229px;top:3257px">コンテンツ事業部</div>
<div class="f" style="left:229px;top:3278px;font-size:12.500px">chosakuken@iwate-np.co.jp</div>
<svg class="abs" style="left:229px;top:3299px" width="26" height="20" viewBox="0 0 26 20"><rect x="1.500" y="1.500" width="23" height="17" rx="1.500" fill="none" stroke="#fff" stroke-width="3"/><path d="M3 3l10 11L23 3" fill="none" stroke="#fff" stroke-width="2"/></svg>
<div class="f" style="left:231px;top:3325px;color:#e6ea55">&gt;記事・写真等の二次利用</div>
<!-- col 3 -->
<div class="f" style="left:405px;top:3240px">販売局販売部</div>
<svg class="abs" style="left:405px;top:3262px" width="27" height="27" viewBox="0 0 30 30"><path fill="#fff" d="M21 1C29 3 28 8 26 13 22 21 15 27 7 29 3 30 1 28 1 25 1 22 3 20 6 20 9 20 10 22 12 21 15 19 17 14 17 11 17 9 15 8 15 6 15 3 17 0 21 1Z"/></svg>
<div class="f" style="left:436px;top:3261px;font-size:25px;line-height:30px;transform:scaleX(.8);transform-origin:0 0">0120-240-840</div>
<div class="f" style="left:405px;top:3289px">(平日 9:00 - 17:00)</div>
<div class="f" style="left:405px;top:3310px;font-size:12.500px">hanbai@iwate-np.co.jp</div>
<svg class="abs" style="left:404px;top:3332px" width="26" height="20" viewBox="0 0 26 20"><rect x="1.500" y="1.500" width="23" height="17" rx="1.500" fill="none" stroke="#fff" stroke-width="3"/><path d="M3 3l10 11L23 3" fill="none" stroke="#fff" stroke-width="2"/></svg>
<!-- col 4 -->
<div class="f" style="left:580px;top:3240px">広告の問い合わせ</div><div class="f" style="left:580px;top:3257px">広告事業局広告部</div>
<svg class="abs" style="left:580px;top:3279px" width="27" height="27" viewBox="0 0 30 30"><path fill="#fff" d="M21 1C29 3 28 8 26 13 22 21 15 27 7 29 3 30 1 28 1 25 1 22 3 20 6 20 9 20 10 22 12 21 15 19 17 14 17 11 17 9 15 8 15 6 15 3 17 0 21 1Z"/></svg>
<div class="f" style="left:612px;top:3278px;font-size:25px;line-height:30px;transform:scaleX(.72);transform-origin:0 0">019-653-4118</div>
<div class="f" style="left:580px;top:3306px">(平日 9:00 - 17:00)</div>
<div class="abs" style="left:580px;top:3333px;width:157px;height:1px;background:#68c2ae"></div>
<div class="f" style="left:580px;top:3340px">事業の問い合わせ</div><div class="f" style="left:580px;top:3357px">広告事業局事業部</div>
<div class="f" style="left:580px;top:3378px;font-size:12.500px">jigyoubu@iwate-np.co.jp</div>
<svg class="abs" style="left:580px;top:3399px" width="26" height="20" viewBox="0 0 26 20"><rect x="1.500" y="1.500" width="23" height="17" rx="1.500" fill="none" stroke="#fff" stroke-width="3"/><path d="M3 3l10 11L23 3" fill="none" stroke="#fff" stroke-width="2"/></svg>
<div class="f" style="left:581px;top:3425px;color:#e6ea55">&gt;後援申請書</div>
<!-- col 5 -->
<div class="f" style="left:755px;top:3240px">総合メディア局</div><div class="f" style="left:755px;top:3257px">デジタル戦略部</div>
<div class="f" style="left:755px;top:3278px;font-size:12.500px">center@iwate-np.co.jp</div>
<svg class="abs" style="left:755px;top:3299px" width="26" height="20" viewBox="0 0 26 20"><rect x="1.500" y="1.500" width="23" height="17" rx="1.500" fill="none" stroke="#fff" stroke-width="3"/><path d="M3 3l10 11L23 3" fill="none" stroke="#fff" stroke-width="2"/></svg>

<div class="f" style="left:0;width:983px;text-align:center;top:3513px;font-size:26px;line-height:30px">47NEWS 参加社</div>
<div class="nl" style="top:3552px">北海道新聞<i></i>室蘭民報<i></i>河北新報<i></i>東奥日報<i></i>デーリー東北<i></i>秋田魁新報<i></i>山形新聞<i></i>福島民報<i></i>福島民友新聞<i></i>産業経済新聞<i></i>日本経済新聞<i></i>ジャパンタイムズ<i></i></div>
<div class="nl" style="top:3569px">下野新聞<i></i>茨城新聞<i></i>上毛新聞<i></i>千葉日報<i></i>神奈川新聞<i></i>埼玉新聞<i></i>山梨日日新聞<i></i>信濃毎日新聞<i></i>新潟日報<i></i>中日新聞<i></i>中部経済新聞<i></i>伊勢新聞<i></i>静岡新聞<i></i>岐阜新聞<i></i></div>
<div class="nl" style="top:3586px">北日本新聞<i></i>北國新聞<i></i>福井新聞<i></i>京都新聞<i></i>神戸新聞<i></i>奈良新聞<i></i>紀伊民報<i></i>山陽新聞<i></i>中国新聞<i></i>日本海新聞<i></i>山口新聞<i></i>山陰中央新報<i></i>四国新聞<i></i>愛媛新聞<i></i></div>
<div class="nl" style="top:3603px">徳島新聞<i></i>高知新聞<i></i>西日本新聞<i></i>大分合同新聞<i></i>宮崎日日新聞<i></i>長崎新聞<i></i>佐賀新聞<i></i>熊本日日新聞<i></i>南日本新聞<i></i>沖縄タイムス<i></i>琉球新報<i></i>共同通信</div>
<div class="abs" style="left:45px;top:3668px;width:892px;height:1px;background:#62c0ad"></div>
<div class="f" style="left:0;width:983px;text-align:center;top:3701px;font-size:27px;line-height:30px;letter-spacing:12px;text-indent:12px;font-weight:bold;font-family:'Noto Sans CJK JP',sans-serif">岩手日報</div>
<div class="f" style="left:0;width:983px;text-align:center;top:3729px;font-size:12px">本ページ掲載内容の無断転載を禁じます。すべての著作権は岩手日報社に属します。</div>
<div class="f" style="left:0;width:983px;text-align:center;top:3747px;font-size:13px;color:#a3dccf">Copyright©2019, IWATE NIPPO CO.,LTD. All rights reserved.</div>
</body></html>
